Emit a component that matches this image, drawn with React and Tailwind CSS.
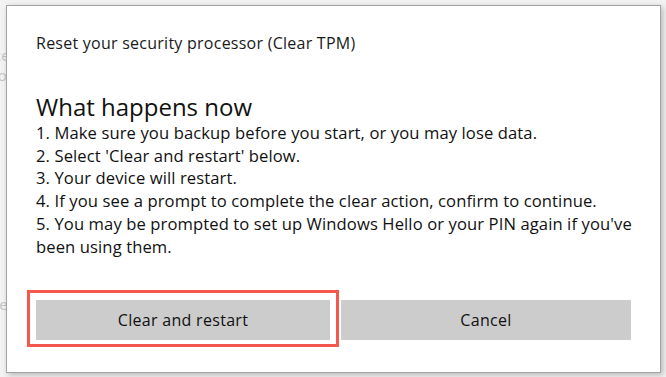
import React from 'react';

const steps = [
  '1. Make sure you backup before you start, or you may lose data.',
  "2. Select 'Clear and restart' below.",
  '3. Your device will restart.',
  '4. If you see a prompt to complete the clear action, confirm to continue.',
  "5. You may be prompted to set up Windows Hello or your PIN again if you've",
  'been using them.',
];

export default function App() {
  return (
    <div className="relative w-[666px] h-[377px] overflow-hidden bg-[#f3f3f3] pt-[5px] pl-[6px] font-['Open_Sans','Noto_Sans',sans-serif]">
      {/* window behind the dialog, mostly hidden */}
      <span className="absolute left-[-6px] top-[44px] text-[15px] text-[#c4c4c4]">ce</span>
      <span className="absolute left-[-6px] top-[64px] text-[15px] text-[#c4c4c4]">lo</span>
      <span className="absolute left-[-6px] top-[293px] text-[15px] text-[#c4c4c4]">te</span>

      <div className="relative w-[655px] h-[368px] bg-white border border-[#a3a3a3] shadow-[2px_2px_6px_rgba(0,0,0,0.25)] pl-[29px] pr-[4px] flex flex-col">
        <p className="mt-[27px] text-[16px] leading-[20px] tracking-[0.25px] text-[#1a1a1a]">
          Reset your security processor (Clear TPM)
        </p>

        <h2 className="mt-[39px] text-[24px] leading-[30px] text-[#111]">What happens now</h2>
        <ol className="text-[16.6px] leading-[22.7px] tracking-[0.1px] text-[#111] whitespace-nowrap">
          {steps.map((s) => (
            <li key={s}>{s}</li>
          ))}
        </ol>

        <div className="mt-[42px] flex gap-[11px]">
          <div className="relative">
            <button className="w-[294px] h-[40px] bg-[#cccccc] text-[16px] tracking-[0.3px] text-[#111]">
              Clear and restart
            </button>
            <div className="absolute left-[-9px] top-[-10px] w-[312px] h-[57px] border-[3px] border-[#f4574b] pointer-events-none" />
          </div>
          <button className="w-[290px] h-[40px] bg-[#cccccc] text-[16px] tracking-[0.3px] text-[#111]">Cancel</button>
        </div>
      </div>
    </div>
  );
}
